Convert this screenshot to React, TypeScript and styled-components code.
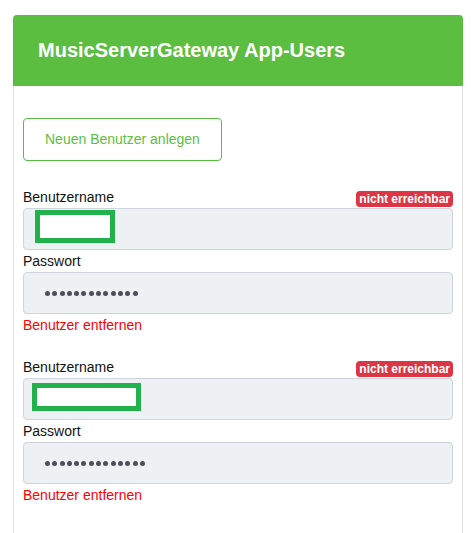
import React from 'react';
import styled, { createGlobalStyle } from 'styled-components';

const GlobalStyle = createGlobalStyle`
  body {
    margin: 0;
    background: #fff;
    font-family: "Liberation Sans", Arial, sans-serif;
  }
`;

const Page = styled.div`
  padding: 15px 8px 0 13px;
`;

const Card = styled.div`
  width: 450px;
  border: 1px solid #e2e2e2;
  border-radius: 4px 4px 0 0;
  box-sizing: border-box;
`;

const Header = styled.div`
  background-color: #5cbe41;
  height: 71px;
  margin: -1px -1px 0 -1px;
  border-radius: 4px 4px 0 0;
  padding-left: 25px;
  display: flex;
  align-items: center;
`;

const Title = styled.h1`
  margin: 0;
  color: #fff;
  font-size: 20px;
  font-weight: bold;
`;

const Body = styled.div`
  padding: 32px 9px 40px 9px;
  display: flex;
  flex-direction: column;
`;

const AddButton = styled.button`
  align-self: flex-start;
  background: #fff;
  color: #5cbe41;
  border: 1px solid #5cbe41;
  border-radius: 4px;
  font-family: inherit;
  font-size: 14px;
  line-height: 21px;
  padding: 10px 21px;
  margin-bottom: 25px;
  cursor: pointer;
`;

const UserBlock = styled.div`
  display: flex;
  flex-direction: column;
  & + & {
    margin-top: 20px;
  }
`;

const LabelRow = styled.div`
  display: flex;
  justify-content: space-between;
  align-items: flex-end;
  height: 22px;
`;

const Label = styled.label`
  font-size: 14px;
  line-height: 22px;
  color: #111;
  align-self: stretch;
`;

const Badge = styled.span`
  background: #dc3545;
  color: #fff;
  font-size: 12px;
  font-weight: bold;
  line-height: 16px;
  padding: 0 3px;
  border-radius: 4px;
  margin-bottom: 1px;
`;

const Field = styled.div`
  height: 42px;
  box-sizing: border-box;
  background: #eef1f4;
  border: 1px solid #cfd4da;
  border-radius: 4px;
  position: relative;
  display: flex;
  align-items: center;
  padding-left: 21px;
`;

const Redaction = styled.span<{ $left: number; $top: number; $w: number; $h: number }>`
  position: absolute;
  left: ${p => p.$left}px;
  top: ${p => p.$top}px;
  width: ${p => p.$w}px;
  height: ${p => p.$h}px;
  box-sizing: border-box;
  background: #fff;
  border: 5px solid #22b14c;
`;

const Dots = styled.span`
  display: flex;
  gap: 2.3px;
`;

const Dot = styled.span`
  width: 5px;
  height: 5px;
  border-radius: 50%;
  background: #495057;
`;

const RemoveLink = styled.a`
  color: #ff0000;
  font-size: 14px;
  line-height: 22px;
  text-decoration: none;
  align-self: flex-start;
  cursor: pointer;
`;

type User = {
  box: { left: number; top: number; w: number; h: number };
  pwLength: number;
};

const users: User[] = [
  { box: { left: 11, top: 1, w: 80, h: 33 }, pwLength: 13 },
  { box: { left: 8, top: 4, w: 109, h: 28 }, pwLength: 14 },
];

const App = () => {
  return (
    <>
      <GlobalStyle />
      <Page>
        <Card>
          <Header>
            <Title>MusicServerGateway App-Users</Title>
          </Header>
          <Body>
            <AddButton>Neuen Benutzer anlegen</AddButton>
            {users.map((u, i) => (
              <UserBlock key={i}>
                <LabelRow>
                  <Label>Benutzername</Label>
                  <Badge>nicht erreichbar</Badge>
                </LabelRow>
                <Field>
                  <Redaction $left={u.box.left} $top={u.box.top} $w={u.box.w} $h={u.box.h} />
                </Field>
                <LabelRow>
                  <Label>Passwort</Label>
                </LabelRow>
                <Field>
                  <Dots>
                    {Array.from({ length: u.pwLength }).map((_, j) => (
                      <Dot key={j} />
                    ))}
                  </Dots>
                </Field>
                <RemoveLink>Benutzer entfernen</RemoveLink>
              </UserBlock>
            ))}
          </Body>
        </Card>
      </Page>
    </>
  );
};

export default App;
